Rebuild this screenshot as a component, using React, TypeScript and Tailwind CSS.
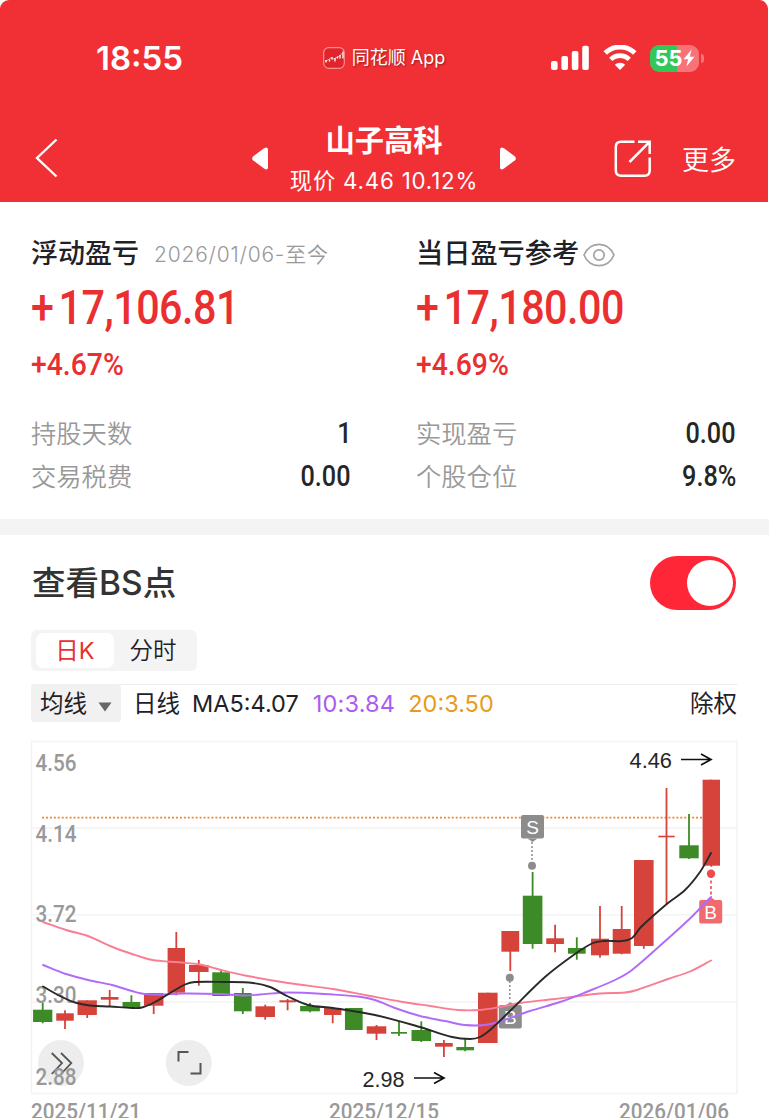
import React, { useState } from 'react';

type Candle = {
  x: number;
  w: number;
  open: number;
  close: number;
  high: number;
  low: number;
  up: boolean;
};

type Point = [number, number];

const UP = '#d5433b';
const DOWN = '#3d8b26';

// [x, width, body top, body bottom, high, low, up]
const rawCandles: [number, number, number, number, number, number, number][] = [
  [42.7, 19.3, 274.7, 287, 268, 288.3, 0],
  [65, 17.5, 278.3, 285.7, 275.3, 294, 1],
  [87.2, 19.3, 265.3, 280, 265.3, 283, 1],
  [109.7, 17.7, 262, 264.7, 255, 271.7, 1],
  [131.4, 17.7, 267, 272.7, 260.3, 272.7, 0],
  [153.7, 19.5, 258, 270.7, 258, 279, 1],
  [176.3, 17.4, 213, 257.7, 197, 260.3, 1],
  [198.8, 19.6, 230, 237, 225, 250.7, 1],
  [221.1, 17.7, 237.3, 261, 234.3, 261, 0],
  [242.8, 17.7, 258, 276.3, 253, 279, 0],
  [265.2, 19.5, 271.3, 282, 269.7, 284.7, 1],
  [287.6, 16.4, 265.3, 267.3, 264, 275.3, 1],
  [310, 19.8, 271, 276.3, 268, 277.3, 0],
  [332.7, 17.4, 273, 280, 273, 288.3, 1],
  [353.8, 17.7, 273, 295, 273, 295, 0],
  [376.5, 19.6, 291.3, 298.7, 290, 305, 1],
  [399, 16, 297, 298.7, 286.3, 301, 0],
  [421.3, 19.6, 295, 306, 286.3, 307, 0],
  [443.9, 17.7, 308, 311.7, 305, 322, 1],
  [465.2, 17.7, 312, 315.3, 303.3, 316.3, 0],
  [487.8, 19.6, 257.7, 308, 257.7, 308, 1],
  [510.3, 17.8, 196, 216.7, 196, 236, 1],
  [532.6, 19.6, 160.7, 209, 137, 213.7, 0],
  [555.1, 17.7, 203.3, 209, 189.7, 217.3, 1],
  [576.8, 17.7, 213, 218.7, 202.3, 224.7, 0],
  [600, 18, 203.7, 220.3, 171, 222.7, 1],
  [621.7, 18, 194, 218.7, 171, 219.3, 1],
  [643.8, 19.6, 125, 211, 125, 213.7, 1],
  [666.5, 16.4, 100.7, 102.3, 53, 169, 1],
  [689, 19.4, 110.3, 123.3, 79, 124, 0],
  [711.3, 17.4, 44.7, 130.7, 44.7, 131.7, 1],
];

const candles: Candle[] = rawCandles.map(([x, w, open, close, high, low, up]) => ({
  x, w, open, close, high, low, up: up === 1,
}));

const ma5: Point[] = [
  [43, 251.5], [60, 261], [75, 267.5], [90, 270.5], [110, 271.5], [132, 273], [142, 272.5],
  [155, 267], [170, 258], [185, 249.5], [195, 247], [225, 247], [253, 248], [270, 252],
  [288, 261.5], [308, 270], [333, 273], [375, 280], [420, 292], [452, 302], [470, 304],
  [480, 302], [490, 295], [510, 276], [545, 242], [575, 219], [593, 208], [605, 206],
  [622, 206], [632, 203], [641, 192], [668, 168], [685, 155], [700, 137], [711, 118],
];

const ma10: Point[] = [
  [43, 230], [66, 239], [88, 245], [112, 250], [132, 256], [145, 259], [165, 259.5],
  [182, 258.5], [220, 259], [245, 260.5], [260, 259.5], [288, 257.5], [333, 259.5],
  [358, 261.5], [375, 265], [395, 273], [420, 281], [445, 286], [465, 290], [485, 290],
  [500, 286.5], [530, 276], [560, 267], [585, 257.5], [615, 245], [632, 235], [668, 203.5],
  [690, 183.5], [711, 162],
];

const ma20: Point[] = [
  [43, 187], [66, 195], [88, 201], [110, 211], [132, 219], [150, 224.5], [167, 226.5],
  [182, 227.5], [200, 229.5], [221, 235], [245, 240.5], [288, 248], [333, 254], [370, 261],
  [400, 266.5], [430, 271], [458, 275], [480, 275], [500, 272], [520, 268], [555, 264],
  [600, 258.5], [625, 257.5], [637, 255], [668, 244], [690, 236.5], [711, 225.5],
];

const priceLabels = [
  { text: '4.56', y: 36 },
  { text: '4.14', y: 106.5 },
  { text: '3.72', y: 186.5 },
  { text: '3.30', y: 268 },
  { text: '2.88', y: 349.5 },
];

const dateLabels = [
  { text: '2025/11/21', x: 31 },
  { text: '2025/12/15', x: 329 },
  { text: '2026/01/06', x: 619 },
];

// smooth curve through the points
function toPath(points: Point[]) {
  let d = `M${points[0][0]} ${points[0][1]}`;
  for (let i = 0; i < points.length - 1; i++) {
    const p0 = points[i - 1] || points[i];
    const p1 = points[i];
    const p2 = points[i + 1];
    const p3 = points[i + 2] || p2;
    const t = (p2[0] - p1[0]) / 3;
    const m1 = (p2[1] - p0[1]) / (p2[0] - p0[0]);
    const m2 = (p3[1] - p1[1]) / (p3[0] - p1[0]);
    d += `C${p1[0] + t} ${p1[1] + t * m1} ${p2[0] - t} ${p2[1] - t * m2} ${p2[0]} ${p2[1]}`;
  }
  return d;
}

const StatusBar = () => (
  <div className="grid h-[116px] grid-cols-3 items-center">
    <div className="pl-[96px] text-[33px] leading-none font-semibold">18:55</div>
    <div className="flex items-center justify-center gap-[7px]">
      <svg width="22" height="22" viewBox="0 0 22 22" fill="none">
        <rect x="0.7" y="0.7" width="20.6" height="20.6" rx="5" fill="#df252b" stroke="#f98e90" strokeWidth="1.2" />
        <path d="M2 14l3-1 2.5-2 3 1 4-2 2-1 3-3" stroke="#fff" strokeWidth="0.6" />
        <path d="M3 13v2.5M6.5 12.5v2M9 10v2.5M12 11v3.5M14.5 9.5v2M17 8v3.5M20 4.5v7" stroke="#fff" strokeWidth="1.3" />
      </svg>
      <span className="text-[18px] leading-none whitespace-nowrap [text-shadow:1px_1px_2px_rgba(90,0,0,0.55)]">
        同花顺 App
      </span>
    </div>
    <div className="flex items-center pl-[39px]">
      <svg width="39" height="26" viewBox="0 0 39 26" fill="#fff">
        <rect x="0" y="16" width="6.6" height="9" rx="2" />
        <rect x="10.4" y="11" width="6.6" height="14" rx="2" />
        <rect x="20.8" y="6" width="6.6" height="19" rx="2" />
        <rect x="31.2" y="0.8" width="6.6" height="24.2" rx="2" />
      </svg>
      <svg className="ml-[13px]" width="34" height="26" viewBox="0 0 34 26" fill="none">
        <path d="M2.2 7.9a21.5 21.5 0 0 1 29.6 0" stroke="#fff" strokeWidth="4.8" />
        <path d="M7.7 14.3a13.5 13.5 0 0 1 18.6 0" stroke="#fff" strokeWidth="4.6" />
        <path d="M17 25l-5.2-5.2a7.4 7.4 0 0 1 10.4 0z" fill="#fff" />
      </svg>
      <div className="ml-[13px] flex h-[27px] w-[49px] items-center justify-center rounded-[9px] bg-[linear-gradient(90deg,#33c759_55%,#f77377_55%)]">
        <span className="text-[22px] leading-none font-bold">55</span>
        <svg width="12" height="18" viewBox="0 0 12 18" fill="#fff">
          <path d="M8.6 0.5L0.5 10.2h4.6L3.4 17.5l8.1-9.7H6.8z" />
        </svg>
      </div>
      <div className="ml-[2px] h-[9px] w-[2.5px] rounded-r-full bg-[#f77377]" />
    </div>
  </div>
);

const NavBar = () => (
  <div className="flex h-[86px] pr-[32px] pl-[35px]">
    <svg className="mt-[22px]" width="23" height="40" viewBox="0 0 23 40" fill="none" stroke="#fff" strokeWidth="2.4">
      <path d="M21.5 1.5L2 20l19.5 18.5" />
    </svg>
    <div className="ml-[194px] flex">
      <svg className="mt-[31px]" width="17" height="23" viewBox="0 0 17 23" fill="#fff">
        <path d="M1 9.6L12 1.2Q16 -1 16 3V20Q16 24 12 21.6L1 13.2Q-0.7 11.4 1 9.6Z" />
      </svg>
      <div className="flex w-[230px] flex-col items-center">
        <h1 className="mt-[5px] text-[29.3px] leading-[40px] font-bold">山子高科</h1>
        <p className="mt-[5px] text-[22.3px] leading-[30px] font-[370] tracking-[0.8px] whitespace-nowrap">现价 4.46 10.12%</p>
      </div>
      <svg className="mt-[31px]" width="17" height="23" viewBox="0 0 17 23" fill="#fff">
        <path d="M16 9.6L5 1.2Q1 -1 1 3V20Q1 24 5 21.6L16 13.2Q17.7 11.4 16 9.6Z" />
      </svg>
    </div>
    <div className="ml-auto flex">
      <svg className="mt-[24px] mr-[30px]" width="38" height="38" viewBox="0 0 38 38" fill="none" stroke="#fff" strokeWidth="2.5">
        <path d="M20.5 1.8H7Q1.8 1.8 1.8 7V30.5Q1.8 35.7 7 35.7H30.5Q35.7 35.7 35.7 30.5V17.5" />
        <path d="M24 1.8H35.7V14M35.3 2.2L15.5 22" />
      </svg>
      <span className="mt-[26px] text-[27px] leading-[38px] font-[350]">更多</span>
    </div>
  </div>
);

interface StatProps {
  title: React.ReactNode;
  amount: string;
  percent: string;
  rows: { label: string; value: string }[];
}

const Stat = ({ title, amount, percent, rows }: StatProps) => (
  <div className="flex flex-col">
    <div className="flex h-[41px] items-center whitespace-nowrap">{title}</div>
    <div className="mt-[5px] h-[56px] origin-left scale-x-[.86] font-[Roboto] text-[48px] leading-[56px] font-medium tracking-[-0.6px] text-[#ea2f31] first-letter:mr-[6px]">
      {amount}
    </div>
    <div className="mt-[12px] h-[34px] origin-left scale-x-[.9] font-[Roboto] text-[31.5px] leading-[34px] font-medium text-[#ea2f31]">
      {percent}
    </div>
    <div className="mt-[30px]">
      {rows.map((row) => (
        <div key={row.label} className="flex h-[43px] items-center justify-between">
          <span className="text-[25.3px] font-[350] text-[#999]">{row.label}</span>
          <span className="origin-right scale-x-[.87] font-[Roboto] text-[29px] font-medium text-[#262626]">{row.value}</span>
        </div>
      ))}
    </div>
  </div>
);

const Marker = ({ x, y, letter, color, up }: { x: number; y: number; letter: string; color: string; up?: boolean }) => (
  <g>
    <rect x={x - 11.5} y={y} width="23" height="23.5" rx="2" fill={color} />
    <path d={up ? `M${x - 4} ${y}L${x} ${y - 3}L${x + 4} ${y}Z` : `M${x - 5} ${y + 23.5}L${x} ${y + 27}L${x + 5} ${y + 23.5}Z`} fill={color} />
    <text x={x} y={y + 18.5} textAnchor="middle" fill="#fff" className="font-['Liberation_Sans'] text-[19px]">{letter}</text>
  </g>
);

const KLineChart = () => (
  <svg className="block" width="769" height="383" viewBox="0 0 769 383" fill="none">
    <path d="M31.5 6.5H737V358.5H31.5ZM31.5 93H737M31.5 179.8H737M31.5 267H737" stroke="#f2f2f2" strokeWidth="1.3" />
    <circle cx="61" cy="328" r="23" fill="#ededed" />
    <circle cx="188.7" cy="328" r="23" fill="#ededed" />
    <path d="M51.7 318L62 328L51.7 339M61 318L71.3 328L61 339" stroke="#555" strokeWidth="1.8" />
    <path d="M178.5 326.5V317H188.5M190.5 338.5H200.5V328" stroke="#555" strokeWidth="2" />
    {priceLabels.map((l) => (
      <text key={l.text} x="35.5" y={l.y} textLength="41" lengthAdjust="spacingAndGlyphs" fill="#999" className="font-[Roboto] text-[24px] font-medium">
        {l.text}
      </text>
    ))}
    {dateLabels.map((l) => (
      <text key={l.text} x={l.x} y="383.5" textLength="110" lengthAdjust="spacingAndGlyphs" fill="#999" className="font-[Roboto] text-[22.5px] font-medium">
        {l.text}
      </text>
    ))}
    <path d="M42 82.7H702" stroke="#f0852c" strokeWidth="1.8" strokeDasharray="2 1.94" />
    {candles.map((c) => (
      <g key={c.x} fill={c.up ? UP : DOWN}>
        <rect x={c.x - c.w / 2} y={c.open} width={c.w} height={c.close - c.open} />
        <rect x={c.x - 0.9} y={c.high} width="1.8" height={c.low - c.high} />
      </g>
    ))}
    <path d="M532 107V127M509.8 246V266" stroke="#8c8c8c" strokeWidth="1.5" strokeDasharray="2 2" />
    <path d="M711 140V160" stroke="#ee5558" strokeWidth="1.7" strokeDasharray="3 2.5" />
    <circle cx="532" cy="130.7" r="4" fill="#8c8c8c" />
    <circle cx="509.8" cy="242.7" r="4" fill="#8c8c8c" />
    <circle cx="711" cy="138.7" r="4.2" fill="#ee4b4e" />
    <Marker x={532.5} y={80} letter="S" color="#8c8c8c" />
    <Marker x={510.3} y={270} letter="B" color="#8c8c8c" up />
    <Marker x={710.7} y={165} letter="B" color="#f16a6e" up />
    <path d={toPath(ma20)} stroke="#f97e93" strokeWidth="1.9" strokeLinecap="round" />
    <path d={toPath(ma10)} stroke="#b06cf8" strokeWidth="1.9" strokeLinecap="round" />
    <path d={toPath(ma5)} stroke="#292929" strokeWidth="1.9" strokeLinecap="round" />
    <text x="629.5" y="33" textLength="42.5" lengthAdjust="spacingAndGlyphs" fill="#262626" className="font-['Liberation_Sans'] text-[22px]">4.46</text>
    <text x="362.5" y="351.5" textLength="42" lengthAdjust="spacingAndGlyphs" fill="#262626" className="font-['Liberation_Sans'] text-[22px]">2.98</text>
    <path d="M681 24.5H711M701 19L711 24.5L701 30" stroke="#111" strokeWidth="1.7" />
    <path d="M414 343H444M434 337.5L444 343L434 348.5" stroke="#111" strokeWidth="1.7" />
  </svg>
);

const App = () => {
  const [showBs, setShowBs] = useState(true);
  const [tab, setTab] = useState('day');

  return (
    <div className="h-[1118px] w-[769px] overflow-hidden bg-white font-[Inter,'Noto_Sans_CJK_SC',sans-serif] text-[#1f2127]">
      <header className="h-[202px] w-[768px] rounded-t-[9px] bg-[#f13035] text-white">
        <StatusBar />
        <NavBar />
      </header>

      <section className="grid h-[317px] grid-cols-[320px_320px] gap-x-[65px] px-[31px] pt-[32px]">
        <Stat
          title={
            <>
              <span className="text-[27px] font-medium">浮动盈亏</span>
              <span className="ml-[15px] text-[21px] font-[350] tracking-[0.8px] text-[#999]">2026/01/06-至今</span>
            </>
          }
          amount="+17,106.81"
          percent="+4.67%"
          rows={[
            { label: '持股天数', value: '1' },
            { label: '交易税费', value: '0.00' },
          ]}
        />
        <Stat
          title={
            <>
              <span className="text-[27.2px] font-medium">当日盈亏参考</span>
              <svg className="ml-[4px]" width="32" height="24" viewBox="0 0 32 24" fill="none" stroke="#a3a3a3" strokeWidth="1.7">
                <path d="M1 12C4 5 9.5 1.3 16 1.3S28 5 31 12C28 19 22.5 22.7 16 22.7S4 19 1 12Z" />
                <circle cx="16" cy="12" r="5.2" />
              </svg>
            </>
          }
          amount="+17,180.00"
          percent="+4.69%"
          rows={[
            { label: '实现盈亏', value: '0.00' },
            { label: '个股仓位', value: '9.8%' },
          ]}
        />
      </section>

      <div className="h-[16px] bg-[#f4f4f4]" />

      <section>
        <div className="flex h-[95px] items-center justify-between pr-[33px] pl-[32px]">
          <h2 className="pt-[2px] text-[33.5px] font-medium text-[#333]">
            查看<span className="font-[450]">BS</span>点
          </h2>
          <button
            onClick={() => setShowBs(!showBs)}
            className={`flex h-[54px] w-[86px] items-center rounded-full px-[3.5px] ${showBs ? 'justify-end bg-[#ff2638]' : 'justify-start bg-gray-200'}`}
          >
            <span className="size-[46px] rounded-full bg-white" />
          </button>
        </div>

        <div className="ml-[31px] flex h-[41px] w-[166px] items-center rounded-[6px] bg-[#f4f4f4] pl-[5px] text-[23.5px]">
          <button
            onClick={() => setTab('day')}
            className={`h-[35px] w-[78px] rounded-[7px] leading-none ${tab === 'day' ? 'bg-white text-[#ea2f31]' : ''}`}
          >
            日K
          </button>
          <button
            onClick={() => setTab('minute')}
            className={`h-[35px] w-[78px] rounded-[7px] leading-none font-[350] ${tab === 'minute' ? 'bg-white text-[#ea2f31]' : ''}`}
          >
            分时
          </button>
        </div>

        <div className="mx-[31px] mt-[13px] flex h-[38px] items-center border-t border-[#efefef] pr-px text-[23.5px] leading-none font-[370] whitespace-nowrap">
          <div className="flex h-[37px] w-[90px] items-center rounded-[3px] bg-[#f1f1f1] pl-[9px]">
            均线
            <svg className="mt-[6px] ml-[11px]" width="14" height="10" viewBox="0 0 14 10" fill="#666">
              <path d="M0.5 0.5H13.5L7 9.5Z" />
            </svg>
          </div>
          <span className="ml-[12px]">日线</span>
          <span className="ml-[12px]">MA5:4.07</span>
          <span className="ml-[14px] tracking-[0.2px] text-[#ab5cf2]">10:3.84</span>
          <span className="ml-[13px] text-[#e99b21]">20:3.50</span>
          <span className="ml-auto">除权</span>
        </div>
        <div className="mt-[13px]">
          <KLineChart />
        </div>
      </section>
    </div>
  );
};

export default App;
